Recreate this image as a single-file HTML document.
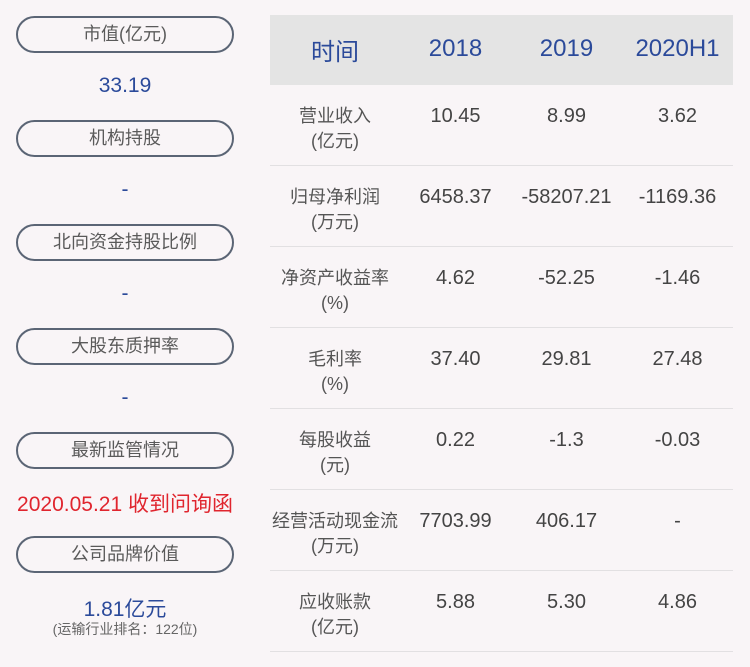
<html><head><style>
body{margin:0;width:750px;height:667px;background:#f9f5f7;font-family:"Liberation Sans","Noto Sans CJK SC",sans-serif;position:relative;overflow:hidden}
.p{position:absolute;left:16px;width:214px;height:33px;border:2px solid #5b6575;border-radius:19px;text-align:center;line-height:33px;font-size:18px;color:#5a5a5a}
.v{position:absolute;left:16px;width:218px;text-align:center;font-size:21px;color:#2b4a9a}
.t{position:absolute;left:270px;top:15px;width:463px}
.h{height:70px;background:#e4e4e4;display:flex;align-items:center;color:#2b4a9a;font-size:24px}
.h .c{margin-top:-2px}
.r{height:80px;border-bottom:1px solid #e2e0e2;display:flex;color:#444;font-size:20px}
.c{text-align:center}
.c1{width:130px}.c2{width:111px}.c3{width:111px}.c4{width:111px}
.r .c{padding-top:19px;line-height:25px}
.r .c1{color:#555;font-size:18px}
</style></head><body>
<div class="p" style="top:16px">市值(亿元)</div>
<div class="v" style="top:74px">33.19</div>
<div class="p" style="top:120px">机构持股</div>
<div class="v" style="top:178px">-</div>
<div class="p" style="top:224px">北向资金持股比例</div>
<div class="v" style="top:282px">-</div>
<div class="p" style="top:328px">大股东质押率</div>
<div class="v" style="top:386px">-</div>
<div class="p" style="top:432px">最新监管情况</div>
<div class="v" style="top:488px;color:#e0252e;font-size:21px;left:8px;width:234px">2020.05.21 收到问询函</div>
<div class="p" style="top:536px">公司品牌价值</div>
<div class="v" style="top:593px">1.81亿元</div>
<div class="v" style="top:619px;font-size:14px;color:#666">(运输行业排名：122位)</div>
<div class="t">
<div class="h"><div class="c c1">时间</div><div class="c c2">2018</div><div class="c c3">2019</div><div class="c c4">2020H1</div></div>
<div class="r"><div class="c c1">营业收入<br>(亿元)</div><div class="c c2">10.45</div><div class="c c3">8.99</div><div class="c c4">3.62</div></div>
<div class="r"><div class="c c1">归母净利润<br>(万元)</div><div class="c c2">6458.37</div><div class="c c3">-58207.21</div><div class="c c4">-1169.36</div></div>
<div class="r"><div class="c c1">净资产收益率<br>(%)</div><div class="c c2">4.62</div><div class="c c3">-52.25</div><div class="c c4">-1.46</div></div>
<div class="r"><div class="c c1">毛利率<br>(%)</div><div class="c c2">37.40</div><div class="c c3">29.81</div><div class="c c4">27.48</div></div>
<div class="r"><div class="c c1">每股收益<br>(元)</div><div class="c c2">0.22</div><div class="c c3">-1.3</div><div class="c c4">-0.03</div></div>
<div class="r"><div class="c c1">经营活动现金流<br>(万元)</div><div class="c c2">7703.99</div><div class="c c3">406.17</div><div class="c c4">-</div></div>
<div class="r"><div class="c c1">应收账款<br>(亿元)</div><div class="c c2">5.88</div><div class="c c3">5.30</div><div class="c c4">4.86</div></div>
</div>
</body></html>
